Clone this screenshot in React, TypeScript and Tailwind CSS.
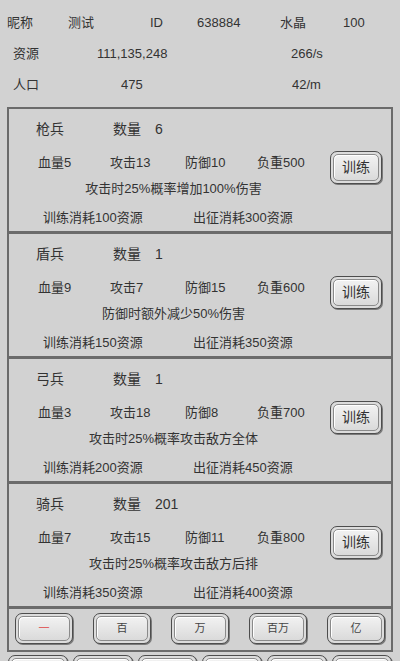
import React from 'react'

type Unit = {
  name: string
  count: string
  hp: string
  atk: string
  def: string
  load: string
  desc: string
  trainCost: string
  marchCost: string
}

const units: Unit[] = [
  { name: '枪兵', count: '6', hp: '血量5', atk: '攻击13', def: '防御10', load: '负重500', desc: '攻击时25%概率增加100%伤害', trainCost: '训练消耗100资源', marchCost: '出征消耗300资源' },
  { name: '盾兵', count: '1', hp: '血量9', atk: '攻击7', def: '防御15', load: '负重600', desc: '防御时额外减少50%伤害', trainCost: '训练消耗150资源', marchCost: '出征消耗350资源' },
  { name: '弓兵', count: '1', hp: '血量3', atk: '攻击18', def: '防御8', load: '负重700', desc: '攻击时25%概率攻击敌方全体', trainCost: '训练消耗200资源', marchCost: '出征消耗450资源' },
  { name: '骑兵', count: '201', hp: '血量7', atk: '攻击15', def: '防御11', load: '负重800', desc: '攻击时25%概率攻击敌方后排', trainCost: '训练消耗350资源', marchCost: '出征消耗400资源' },
]

const font = { fontFamily: '"Liberation Sans", "Noto Sans CJK SC", sans-serif' }

// beveled grey button used throughout the game screen
function BevelButton({ children, className = '' }: { children: React.ReactNode; className?: string }) {
  return (
    <div className={`rounded-[7px] border border-[#4d4d4d] bg-[#dcdcdc] p-[2px] shadow-[1px_1px_0_#7a7a7a] ${className}`}>
      <div className="flex h-full w-full items-center justify-center rounded-[5px] border border-[#8a8a8a] bg-gradient-to-b from-[#f2f2f2] to-[#dadada] shadow-[inset_1px_1px_0_#ffffff]">
        {children}
      </div>
    </div>
  )
}

function UnitCard({ u }: { u: Unit }) {
  return (
    <div className="flex h-[125px] flex-col border-b-[3px] border-[#6b6b6b]">
      <div className="mt-[7px] flex h-[26px] items-center pl-[27px] text-[14px]">
        <span className="w-[77px]">{u.name}</span>
        <span className="w-[42px]">数量</span>
        <span>{u.count}</span>
      </div>
      <div className="mt-[8px] flex">
        <div className="flex flex-1 flex-col">
          <div className="flex h-[26px] items-center pl-[29px]">
            <span className="w-[72px]">{u.hp}</span>
            <span className="w-[75px]">{u.atk}</span>
            <span className="w-[72px]">{u.def}</span>
            <span>{u.load}</span>
          </div>
          <div className="flex h-[26px] items-center justify-center pl-[8px]">{u.desc}</div>
        </div>
        <BevelButton className="mr-[9px] mt-[1px] h-[33px] w-[52px]">
          <span className="text-[14px]">训练</span>
        </BevelButton>
      </div>
      <div className="mt-[3px] flex h-[26px] items-center pl-[34px]">
        <span className="w-[150px]">{u.trainCost}</span>
        <span>{u.marchCost}</span>
      </div>
    </div>
  )
}

export default function App() {
  return (
    <div className="min-h-screen bg-[#d2d2d2] text-[13px] text-[#333]" style={font}>
      <div className="pt-[7px]">
        <div className="flex h-[31px] items-center pl-[7px]">
          <span className="w-[61px]">昵称</span>
          <span className="w-[82px]">测试</span>
          <span className="w-[47px]">ID</span>
          <span className="w-[83px]">638884</span>
          <span className="w-[63px]">水晶</span>
          <span>100</span>
        </div>
        <div className="flex h-[31px] items-center pl-[13px]">
          <span className="w-[84px]">资源</span>
          <span className="w-[194px]">111,135,248</span>
          <span>266/s</span>
        </div>
        <div className="flex h-[31px] items-center pl-[13px]">
          <span className="w-[108px]">人口</span>
          <span className="w-[171px]">475</span>
          <span>42/m</span>
        </div>
      </div>

      <div className="mx-[7px] mt-[7px] border-2 border-[#6b6b6b]">
        {units.map((u) => (
          <UnitCard key={u.name} u={u} />
        ))}
        <div className="flex h-[41px] items-start gap-[20px] pl-[6px] pt-[4px]">
          {['一', '百', '万', '百万', '亿'].map((t, i) => (
            <BevelButton key={t} className="h-[31px] w-[58px]">
              <span className={i === 0 ? 'text-[11px] text-[#e06464]' : 'text-[11px] text-[#444]'}>{t}</span>
            </BevelButton>
          ))}
        </div>
      </div>

      <div className="mt-[3px] flex gap-[5px] px-[8px]">
        {[0, 1, 2, 3, 4, 5].map((i) => (
          <BevelButton key={i} className="h-[30px] flex-1">
            <span />
          </BevelButton>
        ))}
      </div>
    </div>
  )
}
